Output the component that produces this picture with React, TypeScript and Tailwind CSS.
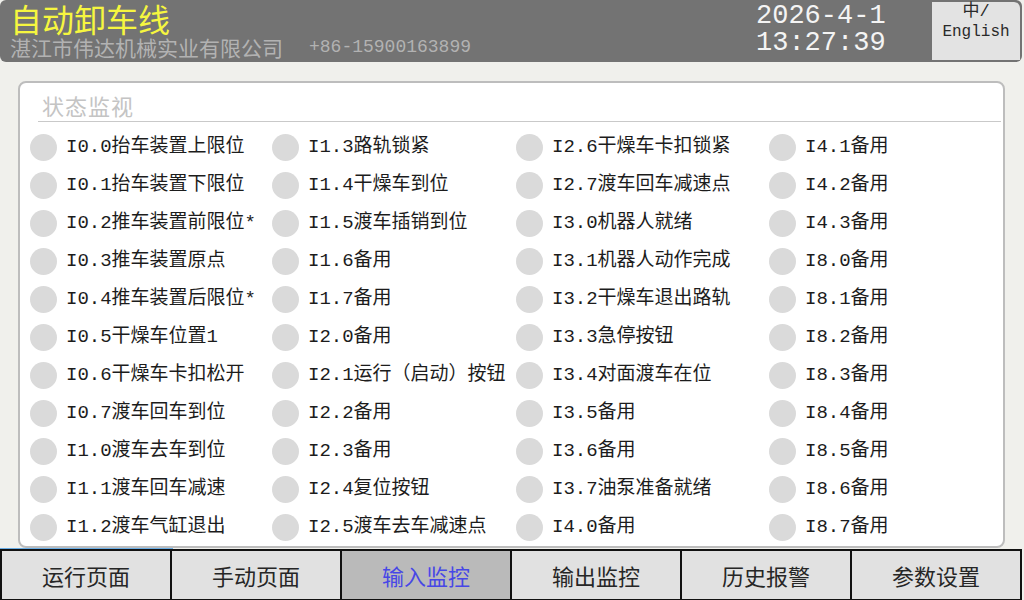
import React from "react";

const MONO_CJK = { fontFamily: '"Liberation Mono", "Noto Sans CJK SC", monospace' };

const columns: string[][] = [
  [
    "I0.0抬车装置上限位",
    "I0.1抬车装置下限位",
    "I0.2推车装置前限位*",
    "I0.3推车装置原点",
    "I0.4推车装置后限位*",
    "I0.5干燥车位置1",
    "I0.6干燥车卡扣松开",
    "I0.7渡车回车到位",
    "I1.0渡车去车到位",
    "I1.1渡车回车减速",
    "I1.2渡车气缸退出",
  ],
  [
    "I1.3路轨锁紧",
    "I1.4干燥车到位",
    "I1.5渡车插销到位",
    "I1.6备用",
    "I1.7备用",
    "I2.0备用",
    "I2.1运行（启动）按钮",
    "I2.2备用",
    "I2.3备用",
    "I2.4复位按钮",
    "I2.5渡车去车减速点",
  ],
  [
    "I2.6干燥车卡扣锁紧",
    "I2.7渡车回车减速点",
    "I3.0机器人就绪",
    "I3.1机器人动作完成",
    "I3.2干燥车退出路轨",
    "I3.3急停按钮",
    "I3.4对面渡车在位",
    "I3.5备用",
    "I3.6备用",
    "I3.7油泵准备就绪",
    "I4.0备用",
  ],
  [
    "I4.1备用",
    "I4.2备用",
    "I4.3备用",
    "I8.0备用",
    "I8.1备用",
    "I8.2备用",
    "I8.3备用",
    "I8.4备用",
    "I8.5备用",
    "I8.6备用",
    "I8.7备用",
  ],
];

const tabs = ["运行页面", "手动页面", "输入监控", "输出监控", "历史报警", "参数设置"];

function Lamp({ label }: { label: string }) {
  return (
    <div className="flex items-center h-[38px]">
      <span className="w-[27px] h-[27px] rounded-full bg-[#dadada] shrink-0" />
      <span className="ml-[9px] text-[19px] leading-none text-[#1c1c1c] whitespace-nowrap" style={MONO_CJK}>
        {label}
      </span>
    </div>
  );
}

export default function App() {
  return (
    <div className="w-[1024px] h-[600px] bg-[#f0f0ec] flex flex-col overflow-hidden">
      {/* header */}
      <div className="w-[1022px] h-[62px] bg-[#737373] rounded-md flex items-stretch shrink-0">
        <div className="flex-1 pl-[10px] pt-[1px]">
          <div
            className="text-[32px] leading-[34px] text-[#f6f63f]"
            style={{ fontFamily: '"Noto Sans CJK SC", sans-serif' }}
          >
            自动卸车线
          </div>
          <div className="flex items-center h-[24px] text-[#b2b2b2]">
            <span className="text-[21px] leading-[24px]" style={{ fontFamily: '"Noto Sans CJK SC", sans-serif' }}>
              湛江市伟达机械实业有限公司
            </span>
            <span
              className="ml-[26px] text-[18px] leading-[24px]"
              style={{ fontFamily: '"Liberation Mono", monospace' }}
            >
              +86-15900163899
            </span>
          </div>
        </div>
        <div
          className="w-[176px] pt-[3px] text-[27px] leading-[27px] text-[#f4f4f4]"
          style={{ fontFamily: '"Liberation Mono", monospace' }}
        >
          <div>2026-4-1</div>
          <div>13:27:39</div>
        </div>
        <div className="w-[88px] my-[2px] mr-[2px] bg-[#e3e3e3] flex flex-col items-center text-[#2a2a2a] rounded-tr-md">
          <span className="text-[17px] leading-[18px] pt-[1px]" style={MONO_CJK}>中/</span>
          <span className="text-[16px] leading-[22px]" style={{ fontFamily: '"Liberation Mono", monospace' }}>
            English
          </span>
        </div>
      </div>

      {/* monitor panel */}
      <div className="mt-[19px] ml-[18px] w-[987px] h-[467px] bg-white border-2 border-[#bdbdbd] rounded-lg shrink-0">
        <div className="ml-[18px] mr-[2px] pt-[9px] pl-[4px] border-b border-[#c9c9c9]">
          <span
            className="text-[22px] leading-[26px] text-[#c4c4c4] tracking-[1px]"
            style={{ fontFamily: '"Noto Sans CJK SC", sans-serif' }}
          >
            状态监视
          </span>
        </div>
        <div className="mt-[6px] ml-[10px] grid grid-cols-[242px_244px_253px_1fr]">
          {columns.map((col, ci) => (
            <div key={ci} className="flex flex-col">
              {col.map(label => (
                <Lamp key={label} label={label} />
              ))}
            </div>
          ))}
        </div>
      </div>

      {/* bottom nav */}
      <div className="mt-[1px] w-[1022px] h-[52px] flex shrink-0">
        {tabs.map((t, i) => (
          <button
            key={t}
            className={
              "flex-1 flex items-center justify-center text-[22px] border-2 border-[#111] " +
              (i > 0 ? "-ml-[2px] " : "outline outline-1 outline-[#6aaee6] ") +
              (i === 2 ? "bg-[#bababa] text-[#4747e6]" : "bg-[#e1e1e1] text-[#262626]")
            }
            style={{ fontFamily: '"Noto Sans CJK SC", sans-serif' }}
          >
            {t}
          </button>
        ))}
      </div>
    </div>
  );
}
